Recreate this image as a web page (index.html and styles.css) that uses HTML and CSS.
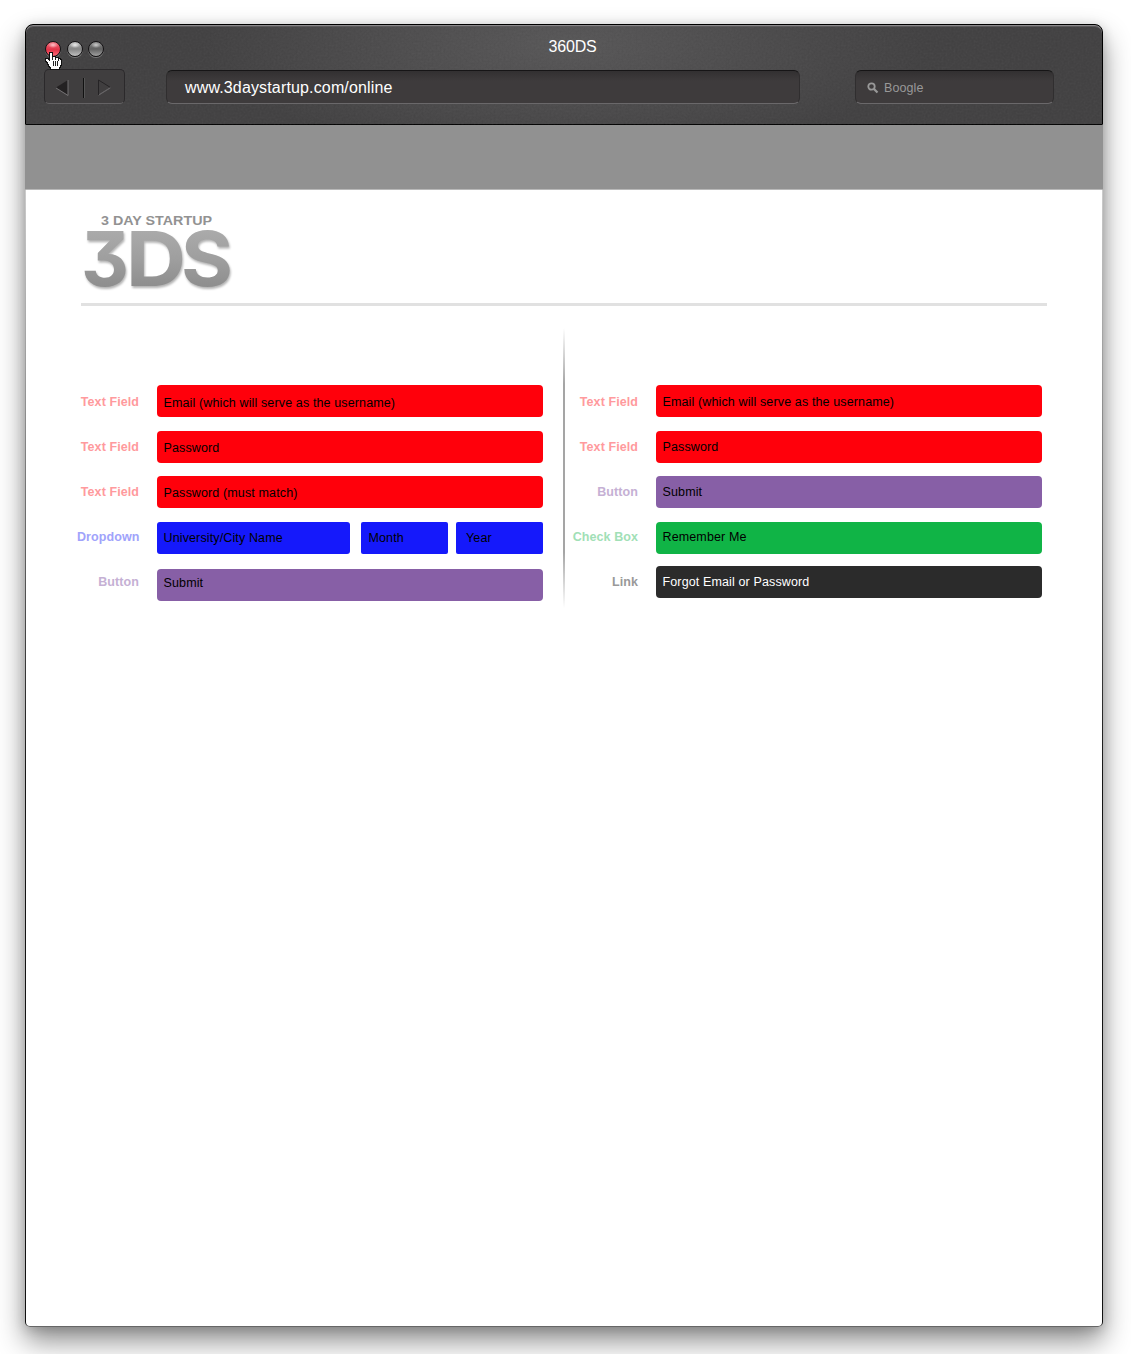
FILE: index.html
```html
<!DOCTYPE html>
<html lang="en">
<head>
<meta charset="utf-8">
<title>360DS</title>
<link rel="stylesheet" href="styles.css">
</head>
<body>
<div class="window">
  <header class="chrome">
    <svg class="grain" width="1076" height="98" aria-hidden="true">
      <filter id="noise"><feTurbulence type="fractalNoise" baseFrequency="0.5" numOctaves="2"/><feColorMatrix type="saturate" values="0"/></filter>
      <rect width="1076" height="98" filter="url(#noise)"/>
    </svg>
    <div class="title-row">
      <div class="lights">
        <span class="light light-red"></span>
        <span class="light light-pale"></span>
        <span class="light light-dark"></span>
        <svg class="cursor" width="18" height="19" viewBox="0 0 18 19" shape-rendering="crispEdges">
          <path d="M5 1h2v4h3v1h3v1h2v1h1v5h-1v2h-1v2H6v-2H5v-1H4v-2H3v-2H2v-1H1V7h2v1h1v1h1z" fill="#fff" stroke="#111" stroke-width="2" paint-order="stroke"/>
          <path d="M8.500 9v5M10.500 9v5M12.500 9v5M7.500 5v3M10.500 6v2M13.500 7v2" stroke="#222"/>
        </svg>
      </div>
      <div class="window-title">360DS</div>
    </div>
    <div class="tool-row">
      <nav class="history">
        <svg width="79" height="33" viewBox="0 0 79 33">
          <path d="M11 17.500L23 10v15z" fill="#232122"/>
          <path d="M11 18L23 25.500V10" fill="none" stroke="#737173"/>
          <path d="M38.500 8v20" stroke="#111"/><path d="M39.500 8v20" stroke="#555"/>
          <path d="M53.500 25L65.500 17.500" fill="none" stroke="#656365"/>
          <path d="M53.500 25V10L65.500 17.500" fill="none" stroke="#252325"/>
          <path d="M54 25L65.500 17.800" fill="none" stroke="#656365"/>
        </svg>
      </nav>
      <div class="inset address">www.3daystartup.com/online</div>
      <div class="inset search">
        <svg width="12" height="12" viewBox="0 0 12 12"><circle cx="4.500" cy="4.500" r="3.200" fill="none" stroke="#999" stroke-width="1.800"/><path d="M7 7l3.500 3.500" stroke="#999" stroke-width="2.200"/></svg>
        <span>Boogle</span>
      </div>
    </div>
  </header>
  <main class="page">
    <div class="band"></div>
    <div class="content">
      <div class="brand">
        <svg width="170" height="95" viewBox="0 0 170 95">
          <defs>
            <linearGradient id="metal" gradientUnits="userSpaceOnUse" x1="0" y1="26" x2="0" y2="84"><stop offset="0" stop-color="#aaa"/><stop offset=".5" stop-color="#9e9e9e"/><stop offset="1" stop-color="#8c8c8c"/></linearGradient>
          </defs>
          <text class="brand-name" x="20" y="19.500" textLength="111" lengthAdjust="spacingAndGlyphs">3 DAY STARTUP</text>
          <g class="brand-mark" fill="url(#metal)">
            <text x="0" y="81" textLength="48" lengthAdjust="spacingAndGlyphs">3</text>
            <text x="45" y="81" textLength="60" lengthAdjust="spacingAndGlyphs">D</text>
            <text x="100" y="81" textLength="52" lengthAdjust="spacingAndGlyphs">S</text>
          </g>
        </svg>
      </div>
      <div class="forms">
        <section class="form form-left">
          <div class="row"><span class="label red-label">Text Field</span><div class="field red">Email (which will serve as the username)</div></div>
          <div class="row drop-1"><span class="label red-label">Text Field</span><div class="field red">Password</div></div>
          <div class="row drop-1"><span class="label red-label">Text Field</span><div class="field red">Password (must match)</div></div>
          <div class="row drop-2"><span class="label blue-label">Dropdown</span><div class="picks"><div class="field blue pick-city">University/City Name</div><div class="field blue pick-month">Month</div><div class="field blue pick-year">Year</div></div></div>
          <div class="row drop-4"><span class="label purple-label">Button</span><div class="field purple">Submit</div></div>
        </section>
        <div class="divider"></div>
        <section class="form form-right">
          <div class="row"><span class="label red-label">Text Field</span><div class="field red">Email (which will serve as the username)</div></div>
          <div class="row drop-1"><span class="label red-label">Text Field</span><div class="field red">Password</div></div>
          <div class="row drop-1"><span class="label purple-label">Button</span><div class="field purple">Submit</div></div>
          <div class="row drop-2"><span class="label green-label">Check Box</span><div class="field green">Remember Me</div></div>
          <div class="row drop-1"><span class="label grey-label">Link</span><div class="field black">Forgot Email or Password</div></div>
        </section>
      </div>
    </div>
  </main>
</div>
</body>
</html>
```
FILE: styles.css
```css
* { box-sizing: border-box; }
body {
  margin: 0;
  padding: 24px 28px 27px 25px;
  height: 1354px;
  overflow: hidden;
  background: #fff;
  font-family: "Liberation Sans", Arial, sans-serif;
}
.window {
  height: 1303px;
  display: flex;
  flex-direction: column;
  border-radius: 8px 8px 5px 5px;
  box-shadow: 0 14px 28px rgba(0,0,0,.45), 0 2px 12px rgba(0,0,0,.16);
}
.chrome {
  position: relative;
  height: 101px;
  padding: 0 0 0 18px;
  border: 1px solid #000;
  border-radius: 8px 8px 0 0;
  background: radial-gradient(ellipse 360px 110px at 50% 20px, #565556, #403f40);
  box-shadow: inset 0 1px #8a888a, inset 0 2px #5c5a5c;
}
.grain { position: absolute; left: 0; top: 2px; opacity: .07; }
.title-row {
  position: relative;
  height: 44px;
  display: grid;
  grid-template-columns: 480px 97px;
}
.lights { position: relative; display: flex; gap: 5.500px; padding: 16px 0 0 1px; }
.light {
  width: 16px;
  height: 16px;
  border: 1.500px solid #151315;
  border-radius: 50%;
  box-shadow: 0 1px #777;
}
.light-red { background: radial-gradient(ellipse 5px 3px at 50% 3px, #ffc4ca, transparent), linear-gradient(#f06b78, #e23348 55%, #ff6976); }
.light-pale { background: radial-gradient(ellipse 5px 3px at 50% 3px, #eee, transparent), linear-gradient(#b5b5b5, #858585 50%, #c0c0c0); }
.light-dark { background: radial-gradient(ellipse 5px 3px at 50% 3px, #ccc, transparent), linear-gradient(#898989, #606060 50%, #a0a0a0); }
.cursor { position: absolute; left: 1px; top: 27px; z-index: 2; }
.window-title {
  padding-top: 12px;
  color: #fff;
  font-size: 16px;
  line-height: 20px;
  text-align: center;
  letter-spacing: -.2px;
}
.tool-row { position: relative; display: flex; align-items: flex-start; }
.history {
  width: 81px;
  height: 35px;
  border: 1px solid #2b292b;
  border-bottom-color: #656365;
  border-radius: 5px;
  background: #403e3f;
}
.history svg { display: block; }
.inset {
  height: 34px;
  margin-top: 1px;
  border: 1px solid #302e2f;
  border-top-color: #161516;
  border-bottom-color: #6a686a;
  border-radius: 6px;
  background: linear-gradient(#323031, #3e3b3c 10px);
}
.address {
  width: 634px;
  margin-left: 41px;
  padding: 7px 18px;
  color: #fff;
  font-size: 16px;
  line-height: 20px;
  letter-spacing: .15px;
}
.search {
  width: 199px;
  margin-left: 55px;
  padding: 1px 11px 0;
  display: flex;
  align-items: center;
  gap: 5px;
  color: #999;
  font-size: 12.500px;
  letter-spacing: .1px;
}
.page {
  flex: 1;
  padding: 0 1px 1px;
  border-radius: 0 0 5px 5px;
  background: linear-gradient(#919191 0, #919191 64px, #ccc 65px, #999 250px, #151515 650px, #111 1199px, #666 1201px);
}
.band { height: 65px; background: #919191; border-bottom: 1px solid #b8b8b8; }
.content {
  height: 1136px;
  padding-left: 51px;
  background: #fff;
  border-radius: 0 0 4px 4px;
}
.brand {
  width: 966px;
  height: 116px;
  margin-left: 4px;
  padding-top: 15px;
  border-bottom: 3px solid #e1e1e1;
}
.brand svg { display: block; }
.brand-name { font: bold 13.500px "Liberation Sans", Arial, sans-serif; fill: #929292; }
.brand-mark { font: 700 75px Inter, sans-serif; font-feature-settings: "cv09"; filter: drop-shadow(1px 2px 1px rgba(0,0,0,.3)); }
.forms { display: flex; padding-top: 22px; }
.form { display: flex; flex-direction: column; padding-top: 52px; }
.form-left { width: 466px; }
.form-right { width: 470px; margin-left: 7px; }
.divider {
  width: 2px;
  height: 280px;
  margin-left: 20px;
  background: linear-gradient(transparent, #a5a5a5 20%, #a5a5a5 80%, transparent);
}
.row {
  --drop: 0px;
  height: 45px;
  display: flex;
  align-items: flex-start;
}
.drop-1 { --drop: 1px; }
.drop-2 { --drop: 2px; }
.drop-4 { --drop: 4px; }
.label {
  width: 62px;
  padding-top: 14px;
  flex: none;
  font-size: 12.500px;
  font-weight: bold;
  line-height: 16px;
  text-align: right;
  white-space: nowrap;
  letter-spacing: .08px;
}
.form-right .label { width: 66px; }
.field {
  width: 386px;
  height: 32px;
  margin: calc(5px + var(--drop)) 0 0 18px;
  padding: calc(10px - var(--drop)) 0 0 6.500px;
  border-radius: 4px;
  color: #000;
  font-size: 12.500px;
  line-height: 16px;
  letter-spacing: .13px;
  white-space: nowrap;
}
.form-right .field { padding-top: calc(9px - var(--drop)); }
.picks { display: flex; }
.picks .pick-city { width: 193px; border-radius: 3px; }
.picks .pick-month { width: 87px; margin-left: 11px; padding-left: 7.500px; border-radius: 2px; }
.picks .pick-year { width: 87px; margin-left: 8px; padding-left: 10px; border-radius: 2px; }
.red { background: #ff000b; }
.blue { background: #1519fb; }
.purple { background: #875fa6; }
.green { background: #10b446; }
.black { background: #2b2b2b; color: #fff; }
.red-label { color: #ff9a9d; }
.blue-label { color: #a0a3fb; }
.purple-label { color: #c5b0d4; }
.green-label { color: #a1e0b6; }
.grey-label { color: #999; }
```
